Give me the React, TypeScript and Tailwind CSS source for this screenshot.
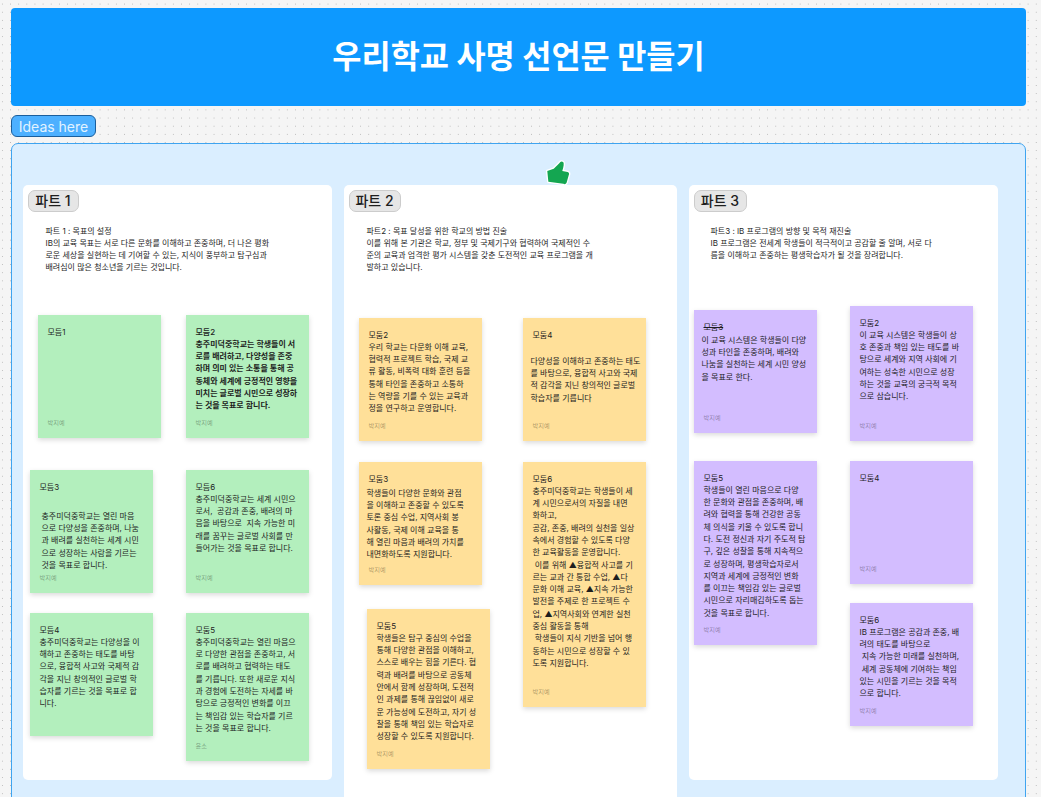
import React from 'react';

type Note = {
  pos: string;
  title: string;
  body?: string;
  author?: string;
  titleClass?: string;
  bodyClass?: string;
};

const part1: Note[] = [
  { pos: 'left-[15px] top-[130px] h-[123px]', title: '모듬1' },
  {
    pos: 'left-[163px] top-[130px] h-[123px]',
    title: '모듬2',
    titleClass: 'font-medium',
    bodyClass: 'font-semibold',
    body: '충주미덕중학교는 학생들이 서\n로를 배려하고, 다양성을 존중\n하며 의미 있는 소통을 통해 공\n동체와 세계에 긍정적인 영향을\n미치는 글로벌 시민으로 성장하\n는 것을 목표로 합니다.',
  },
  {
    pos: 'left-[7px] top-[285px] h-[123px]',
    title: '모듬3',
    bodyClass: 'mt-[17px] ml-[2px]',
    body: '충주미덕중학교는 열린 마음\n으로 다양성을 존중하며, 나눔\n과 배려를 실천하는 세계 시민\n으로 성장하는 사람을 기르는\n것을 목표로 합니다.',
  },
  {
    pos: 'left-[163px] top-[285px] h-[123px]',
    title: '모듬6',
    body: '충주미덕중학교는 세계 시민으\n로서,  공감과 존중, 배려의 마\n음을 바탕으로  지속 가능한 미\n래를 꿈꾸는 글로벌 사회를 만\n들어가는 것을 목표로 합니다.',
  },
  {
    pos: 'left-[7px] top-[428px] h-[123px]',
    title: '모듬4',
    author: '',
    body: '충주미덕중학교는 다양성을 이\n해하고 존중하는 태도를 바탕\n으로, 융합적 사고와 국제적 감\n각을 지닌 창의적인 글로벌 학\n습자를 기르는 것을 목표로 합\n니다.',
  },
  {
    pos: 'left-[163px] top-[428px] h-[148px]',
    title: '모둠5',
    author: '윤소',
    body: '충주미덕중학교는 열린 마음으\n로 다양한 관점을 존중하고, 서\n로를 배려하고 협력하는 태도\n를 기릅니다. 또한 새로운 지식\n과 경험에 도전하는 자세를 바\n탕으로 긍정적인 변화를 이끄\n는 책임감 있는 학습자를 기르\n는 것을 목표로 합니다.',
  },
];

const part2: Note[] = [
  {
    pos: 'left-[15px] top-[133px] h-[123px]',
    title: '모둠2',
    body: '우리 학교는 다문화 이해 교육,\n협력적 프로젝트 학습, 국제 교\n류 활동, 비폭력 대화 훈련 등을\n통해 타인을 존중하고 소통하\n는 역량을 기를 수 있는 교육과\n정을 연구하고 운영합니다.',
  },
  {
    pos: 'left-[179px] top-[133px] h-[123px]',
    title: '모둠4',
    bodyClass: 'mt-[14px] -ml-[2px]',
    body: '다양성을 이해하고 존중하는 태도\n를 바탕으로, 융합적 사고와 국제\n적 감각을 지닌 창의적인 글로벌\n학습자를 기릅니다',
  },
  {
    pos: 'left-[15px] top-[277px] h-[123px]',
    title: '모둠3',
    bodyClass: 'mt-[2px] -ml-[2px]',
    body: '학생들이 다양한 문화와 관점\n을 이해하고 존중할 수 있도록\n토론 중심 수업, 지역사회 봉\n사활동, 국제 이해 교육을 통\n해 열린 마음과 배려의 가치를\n내면화하도록 지원합니다.',
  },
  {
    pos: 'left-[179px] top-[277px] h-[245px]',
    title: '모둠6',
    body: '충주미덕중학교는 학생들이 세\n계 시민으로서의 자질을 내면\n화하고,\n공감, 존중, 배려의 실천을 일상\n속에서 경험할 수 있도록 다양\n한 교육활동을 운영합니다.\n 이를 위해 ▲융합적 사고를 기\n르는 교과 간 통합 수업, ▲다\n문화 이해 교육, ▲지속 가능한\n발전을 주제로 한 프로젝트 수\n업, ▲지역사회와 연계한 실천\n중심 활동을 통해\n 학생들이 지식 기반을 넘어 행\n동하는 시민으로 성장할 수 있\n도록 지원합니다.',
  },
  {
    pos: 'left-[23px] top-[424px] h-[160px]',
    title: '모둠5',
    body: '학생들은 탐구 중심의 수업을\n통해 다양한 관점을 이해하고,\n스스로 배우는 힘을 기른다. 협\n력과 배려를 바탕으로 공동체\n안에서 함께 성장하며, 도전적\n인 과제를 통해 끊임없이 새로\n운 가능성에 도전하고, 자기 성\n찰을 통해 책임 있는 학습자로\n성장할 수 있도록 지원합니다.',
  },
];

const part3: Note[] = [
  {
    pos: 'left-[5px] top-[125px] h-[123px]',
    title: '모둠3',
    titleClass: 'line-through',
    bodyClass: '-ml-[2px] mt-[1px]',
    body: '이 교육 시스템은 학생들이 다양\n성과 타인을 존중하며, 배려와\n나눔을 실천하는 세계 시민 양성\n을 목표로 한다.',
  },
  {
    pos: 'left-[161px] top-[121px] h-[135px]',
    title: '모둠2',
    body: '이 교육 시스템은 학생들이 상\n호 존중과 책임 있는 태도를 바\n탕으로 세계와 지역 사회에 기\n여하는 성숙한 시민으로 성장\n하는 것을 교육의 궁극적 목적\n으로 삼습니다.',
  },
  {
    pos: 'left-[5px] top-[276px] h-[184px]',
    title: '모둠5',
    body: '학생들이 열린 마음으로 다양\n한 문화와 관점을 존중하며, 배\n려와 협력을 통해 건강한 공동\n체 의식을 키울 수 있도록 합니\n다. 도전 정신과 자기 주도적 탐\n구, 깊은 성찰을 통해 지속적으\n로 성장하며, 평생학습자로서\n지역과 세계에 긍정적인 변화\n를 이끄는 책임감 있는 글로벌\n시민으로 자리매김하도록 돕는\n것을 목표로 합니다.',
  },
  { pos: 'left-[161px] top-[276px] h-[123px]', title: '모둠4' },
  {
    pos: 'left-[161px] top-[418px] h-[123px]',
    title: '모둠6',
    body: 'IB 프로그램은 공감과 존중, 배\n려의 태도를 바탕으로\n 지속 가능한 미래를 실천하며,\n 세계 공동체에 기여하는 책임\n있는 시민을 기르는 것을 목적\n으로 합니다.',
  },
];

function Sticky({ note, color }: { note: Note; color: string }) {
  const author = note.author === undefined ? '박지예' : note.author;
  return (
    <div className={`absolute flex w-[123px] flex-col px-[10px] pt-[11px] pb-[11px] text-[8px] leading-[12.3px] text-[#1e1e1e] shadow-[0_2px_5px_rgba(0,0,0,0.15)] ${color} ${note.pos}`}>
      <p className={note.titleClass}>{note.title}</p>
      {note.body && <p className={`whitespace-pre ${note.bodyClass ?? ''}`}>{note.body}</p>}
      {author && <p className="mt-auto text-[6.2px] leading-[8px] text-black/35">{author}</p>}
    </div>
  );
}

function Panel({ label, chip, width, height, introClass, intro, notes, color }: {
  label: string;
  chip: string;
  width: string;
  height: string;
  introClass: string;
  intro: string;
  notes: Note[];
  color: string;
}) {
  return (
    <div className={`relative shrink-0 rounded-[5px] bg-white ${width} ${height}`}>
      <div className="pl-[5px] pt-[5px]">
        <div className={`flex h-[22px] items-center justify-center rounded-[7px] border border-[#cccccc] bg-[#e6e6e6] text-[14px] font-medium text-[#1e1e1e] ${chip}`}>
          {label}
        </div>
      </div>
      <p className={`whitespace-pre pt-[13px] text-[8px] leading-[12.3px] text-[#1e1e1e] ${introClass}`}>{intro}</p>
      {notes.map((n, i) => (
        <Sticky key={i} note={n} color={color} />
      ))}
    </div>
  );
}

export default function App() {
  return (
    <div className="h-[797px] overflow-hidden bg-[#f5f5f5] bg-[radial-gradient(#b5b5b5_0.55px,transparent_0.7px)] bg-[size:8.15px_8.15px] bg-[position:-1.7px_0] px-[11px] pt-[8px] font-['Inter','Noto_Sans_CJK_KR',sans-serif]">
      <header className="flex h-[98px] w-[1015px] items-center justify-center rounded-[4px] bg-[#0d99ff]">
        <h1 className="text-[31.7px] font-bold text-white">우리학교 사명 선언문 만들기</h1>
      </header>

      <div className="mt-[9px] flex h-[22px] w-[85px] items-center justify-center rounded-[6px] border border-[#1a5e9c] bg-[#4db0ff] text-[14px] text-[#e3f3ff]">
        Ideas here
      </div>

      <section className="relative mt-[6px] h-[700px] w-[1015px] rounded-[7px] border-[1.5px] border-[#3fa4f0] bg-[#daeeff] pl-[10.5px] pt-[40.5px]">
        <div className="flex gap-[12px]">
          <Panel
            label="파트 1"
            chip="w-[51px]"
            width="w-[309px]"
            height="h-[595px]"
            introClass="pl-[23px]"
            notes={part1}
            color="bg-[#b3efbd]"
            intro={'파트 1 : 목표의 설정\nIB의 교육 목표는 서로 다른 문화를 이해하고 존중하며, 더 나은 평화\n로운 세상을 실현하는 데 기여할 수 있는, 지식이 풍부하고 탐구심과\n배려심이 많은 청소년을 기르는 것입니다.'}
          />
          <Panel
            label="파트 2"
            chip="w-[52px]"
            width="w-[333px]"
            height="h-[640px]"
            introClass="pl-[23px]"
            notes={part2}
            color="bg-[#ffe099]"
            intro={'파트2 : 목표 달성을 위한 학교의 방법 진술\n이를 위해 본 기관은 학교, 정부 및 국제기구와 협력하여 국제적인 수\n준의 교육과 엄격한 평가 시스템을 갖춘 도전적인 교육 프로그램을 개\n발하고 있습니다.'}
          />
          <Panel
            label="파트 3"
            chip="w-[53px]"
            width="w-[309px]"
            height="h-[595px]"
            introClass="pl-[22px]"
            notes={part3}
            color="bg-[#d3bdff]"
            intro={'파트3 : IB 프로그램의 방향 및 목적 재진술\nIB 프로그램은 전세계 학생들이 적극적이고 공감할 줄 알며, 서로 다\n름을 이해하고 존중하는 평생학습자가 될 것을 장려합니다.'}
          />
        </div>
        <svg viewBox="14 8 28 28" className="absolute left-[531px] top-[13px] h-[30px] w-[30px]">
          <path
            d="M18 21 L24 19 L29 14 Q31 11 33 13 Q34 15 32 21 L37 22 Q39 23 38 25 L36 32 Q35 34 33 33 L19 31 Z"
            fill="#14a651"
            stroke="#ffffff"
            strokeWidth="2.5"
            strokeLinejoin="round"
            paintOrder="stroke"
          />
        </svg>
      </section>
    </div>
  );
}
